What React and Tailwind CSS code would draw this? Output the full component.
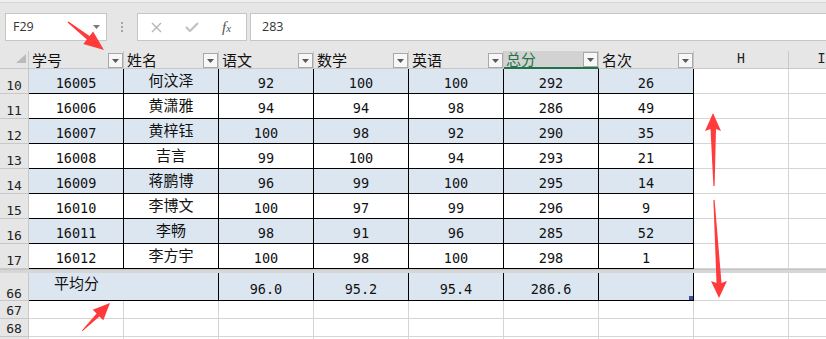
import React from 'react';

const data = [
  [10, '16005', '何汶泽', '92', '100', '100', '292', '26'],
  [11, '16006', '黄潇雅', '94', '94', '98', '286', '49'],
  [12, '16007', '黄梓钰', '100', '98', '92', '290', '35'],
  [13, '16008', '吉言', '99', '100', '94', '293', '21'],
  [14, '16009', '蒋鹏博', '96', '99', '100', '295', '14'],
  [15, '16010', '李博文', '100', '97', '99', '296', '9'],
  [16, '16011', '李畅', '98', '91', '96', '285', '52'],
  [17, '16012', '李方宇', '100', '98', '100', '298', '1'],
];

const heads = ['学号', '姓名', '语文', '数学', '英语', '总分', '名次'];

const MONO = "font-['DejaVu_Sans_Mono','Noto_Sans_CJK_SC',monospace]";
const CJK = "font-['Noto_Sans_CJK_SC',sans-serif]";

function RowNum({ n, extra }) {
  return (
    <div
      className={`w-[29px] shrink-0 h-full bg-[#e6e6e6] border-r border-b border-[#c8c8c8] flex items-end justify-center text-[13px] leading-[12px] text-[#222] ${MONO} ${extra}`}
    >
      {n}
    </div>
  );
}

function FilterBtn() {
  return (
    <div className="w-[15px] h-[15px] shrink-0 bg-[#f7f7f7] border border-[#a8a8a8] flex items-center justify-center">
      <svg width="7" height="4" viewBox="0 0 7 4">
        <polygon points="0,0 7,0 3.5,4" fill="#5a5a5a" />
      </svg>
    </div>
  );
}

function GridCell({ extra = 'w-[95px]' }) {
  return <div className={`shrink-0 h-full border-r border-b border-[#d4d4d4] ${extra}`} />;
}

export default function App() {
  return (
    <div className="relative w-[826px] h-[339px] overflow-hidden bg-white">
      {/* formula bar */}
      <div className="h-[51px] bg-[#e6e6e6] flex flex-col">
        <div className="h-[3px] bg-[#eeeeee] border-b border-[#d6d6d6]" />
        <div className="flex items-start pl-[5px] pt-[10px]">
          <div className="w-[102px] h-[28px] shrink-0 bg-white border border-[#c6c6c6] flex items-center justify-between pl-[7px] pr-[6px]">
            <span className="font-['Open_Sans',sans-serif] text-[12.5px] text-[#333]">F29</span>
            <svg width="7" height="4" viewBox="0 0 7 4">
              <polygon points="0,0 7,0 3.5,4" fill="#7a7a7a" />
            </svg>
          </div>
          <div className="w-[30px] h-[28px] shrink-0 flex flex-col items-center justify-center gap-[2px]">
            <div className="w-[2px] h-[2px] bg-[#a4a4a4]" />
            <div className="w-[2px] h-[2px] bg-[#a4a4a4]" />
            <div className="w-[2px] h-[2px] bg-[#a4a4a4]" />
          </div>
          <div className="w-[110px] h-[28px] shrink-0 bg-white border border-[#c6c6c6] flex items-center pl-[13px]">
            <svg width="11" height="11" viewBox="0 0 11 11">
              <path d="M1 1 L10 10 M10 1 L1 10" stroke="#b5b5b5" strokeWidth="1.4" />
            </svg>
            <svg className="ml-[23px]" width="14" height="10" viewBox="0 0 14 10">
              <polyline points="1,5 5,9 13,1" fill="none" stroke="#c2c2c2" strokeWidth="2.2" />
            </svg>
            <span className="ml-[23px] font-['Liberation_Serif',serif] italic text-[15px] leading-none text-[#555]">
              f<span className="text-[11px]">x</span>
            </span>
          </div>
          <div className="ml-[3px] w-[600px] h-[28px] shrink-0 bg-white border border-[#c6c6c6] flex items-center pl-[11px]">
            <span className="font-['Open_Sans',sans-serif] text-[12.5px] text-[#333]">283</span>
          </div>
        </div>
      </div>

      {/* column headers */}
      <div className="flex h-[18px] bg-[#e6e6e6]">
        <div className="w-[29px] shrink-0 h-full border-r border-b border-[#c8c8c8] flex items-end justify-end pr-[2px] pb-[5px]">
          <svg width="10" height="9" viewBox="0 0 10 9">
            <polygon points="10,0 10,9 0,9" fill="#bababa" />
          </svg>
        </div>
        {heads.map((h, i) =>
          i === 5 ? (
            <div
              key={h}
              className="w-[95px] shrink-0 h-full bg-[#d2d2d2] border-r border-[#c8c8c8] border-b-2 border-b-[#217346] flex items-end justify-between pl-[2px]"
            >
              <span className={`text-[15px] leading-[16px] text-[#217346] ${CJK}`}>{h}</span>
              <FilterBtn />
            </div>
          ) : (
            <div
              key={h}
              className="w-[95px] shrink-0 h-full border-r border-b border-[#c8c8c8] flex items-end justify-between pl-[3px]"
            >
              <span className={`text-[15px] leading-[17px] text-[#111] ${CJK}`}>{h}</span>
              <FilterBtn />
            </div>
          )
        )}
        <div className="w-[95px] shrink-0 h-full border-r border-b border-[#c8c8c8] flex items-center justify-center font-['Liberation_Mono',monospace] text-[14px] text-[#222]">
          H
        </div>
        <div className="w-[66px] shrink-0 h-full border-r border-b border-[#c8c8c8] flex items-center justify-center font-['Liberation_Mono',monospace] text-[14px] text-[#222]">
          I
        </div>
      </div>

      {/* table rows */}
      {data.map((r) => {
        const blue = r[0] % 2 === 0;
        const bg = blue ? 'bg-[#dce6f1]' : 'bg-white';
        return (
          <div key={r[0]} className="flex h-[25px]">
            <RowNum n={r[0]} extra="pb-[1px]" />
            {r.slice(1).map((v, i) => (
              <div
                key={i}
                className={`w-[95px] shrink-0 h-full border-r border-b border-black flex items-end justify-center text-[#111] ${bg} ${
                  i === 1
                    ? `text-[15px] leading-[16px] pb-[5px] ${CJK}`
                    : `text-[13.5px] leading-[16px] pb-[2px] ${MONO}`
                }`}
              >
                {v}
              </div>
            ))}
            <GridCell />
            <GridCell extra="w-[66px]" />
          </div>
        );
      })}

      {/* split bar */}
      <div className="h-[4px] bg-[#d6d6d6] border-t border-[#c6c6c6]" />

      {/* row 66 */}
      <div className="flex h-[28px]">
        <RowNum n={66} extra="pb-0" />
        <div className={`w-[95px] shrink-0 h-full bg-[#dce6f1] border-b border-black flex items-end justify-center text-[15px] leading-[16px] pb-[9px] text-[#111] ${CJK}`}>
          平均分
        </div>
        <div className="w-[95px] shrink-0 h-full bg-[#dce6f1] border-r border-b border-black" />
        {['96.0', '95.2', '95.4', '286.6'].map((v) => (
          <div
            key={v}
            className={`w-[95px] shrink-0 h-full bg-[#dce6f1] border-r border-b border-black flex items-end justify-center text-[13.5px] leading-[16px] pb-[3px] text-[#111] ${MONO}`}
          >
            {v}
          </div>
        ))}
        <div className="relative w-[95px] shrink-0 h-full bg-[#dce6f1] border-r border-b border-black">
          <div className="absolute right-0 bottom-0 w-[4px] h-[4px] bg-[#3f4fa0]" />
        </div>
        <GridCell />
        <GridCell extra="w-[66px]" />
      </div>

      {/* rows 67-69 */}
      {[67, 68, ''].map((n, k) => (
        <div key={k} className="flex h-[18px]">
          <RowNum n={n} extra="pb-[1px]" />
          {[0, 1, 2, 3, 4, 5, 6, 7].map((i) => (
            <GridCell key={i} />
          ))}
          <GridCell extra="w-[66px]" />
        </div>
      ))}

      {/* red annotation arrows */}
      <svg
        className="absolute inset-0 pointer-events-none"
        width="826"
        height="339"
        viewBox="0 0 826 339"
      >
        <polygon
          fill="#ff3b3b"
          points="67.5,22.6 68.5,21.4 89.55,35.96 93.1,31.4 104,50 83.3,44.0 86.85,39.44"
        />
        <polygon
          fill="#ff3b3b"
          points="82.35,331.35 99.4,316.4 103.3,320.3 110,303 92.7,309.7 96.6,313.6 81.65,330.65"
        />
        <polygon
          fill="#ff3b3b"
          points="713,113 721,131 716,129 714.6,186 713.4,186 710.5,129 705,131"
        />
        <polygon
          fill="#ff3b3b"
          points="713.4,200 714.6,200 721.5,283 727,281 719,298 711,281 716.5,283"
        />
      </svg>
    </div>
  );
}
